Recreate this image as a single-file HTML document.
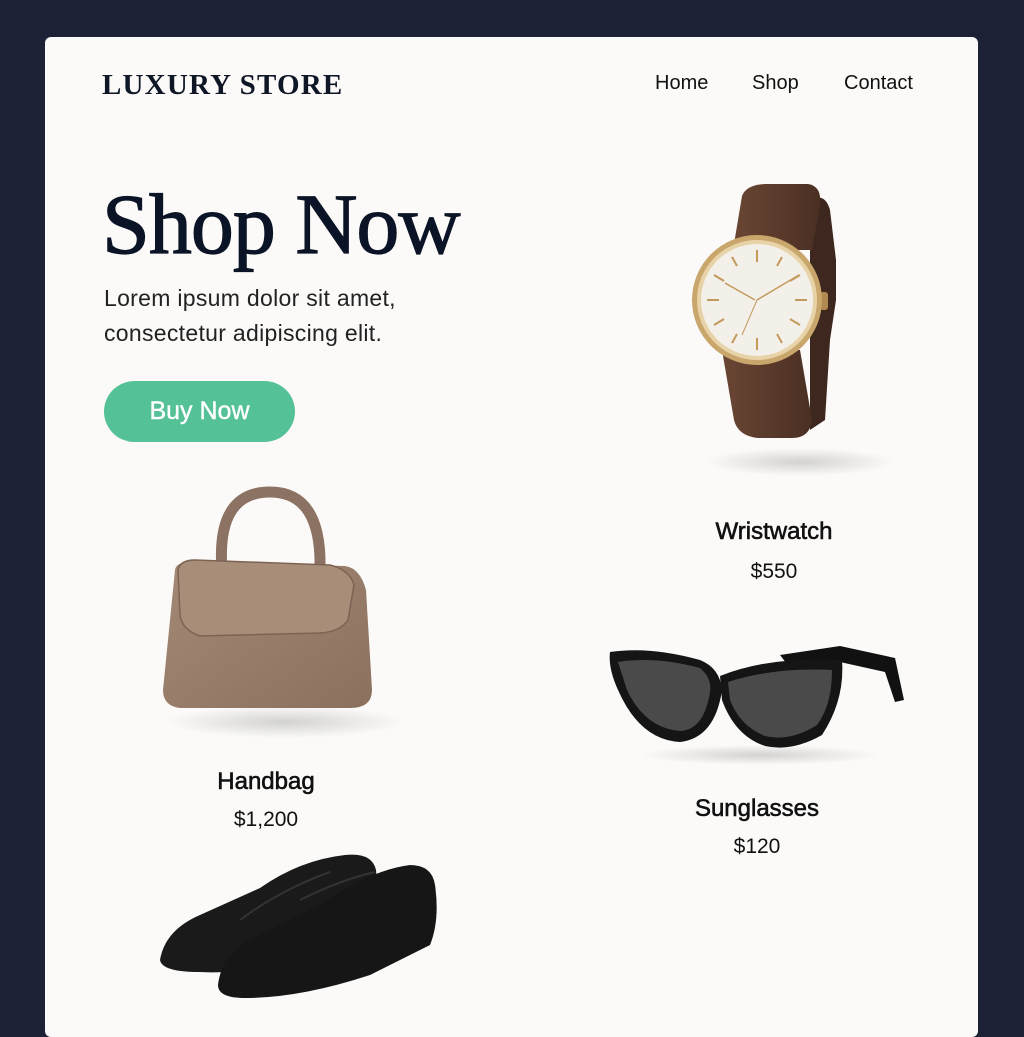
<!DOCTYPE html>
<html><head><style>
*{margin:0;padding:0;box-sizing:border-box}
body{width:1024px;height:1024px;background:#1c2135;position:relative;overflow:hidden;font-family:"Liberation Sans",sans-serif}
.card{position:absolute;left:45px;top:37px;width:933px;height:1000px;background:#fbfaf8;border-radius:6px}
.t{position:absolute;white-space:nowrap;color:#111}
.logo{left:102px;top:69px;font-family:"Liberation Serif",serif;font-weight:bold;font-size:29px;color:#0f1626;letter-spacing:1.2px}
.nav{top:72px;font-size:20px;color:#111}
.h1{left:102px;top:174px;font-family:"Liberation Serif",serif;font-size:86px;color:#0b1426;letter-spacing:-1px;-webkit-text-stroke:1.2px #0b1426}
.p{left:104px;font-size:23px;color:#222;letter-spacing:0.3px}
.btn{position:absolute;left:104px;top:381px;width:191px;height:61px;border-radius:31px;background:#55c196;color:#fff;font-size:25px;text-align:center;line-height:61px;-webkit-text-stroke:0.4px #fff}
.name{font-size:24px;text-align:center;width:240px;color:#111;-webkit-text-stroke:0.6px #111}
.price{font-size:21px;text-align:center;width:240px;color:#111}
</style></head><body>
<div class="card"></div>
<div class="t logo">LUXURY STORE</div>
<div class="t nav" style="left:655px">Home</div>
<div class="t nav" style="left:752px">Shop</div>
<div class="t nav" style="left:844px">Contact</div>
<div class="t h1">Shop Now</div>
<div class="t p" style="top:285px">Lorem ipsum dolor sit amet,</div>
<div class="t p" style="top:320px">consectetur adipiscing elit.</div>
<div class="btn">Buy Now</div>

<svg style="position:absolute;left:0;top:0" width="1024" height="1024">
<defs>
<radialGradient id="sh"><stop offset="0" stop-color="#000" stop-opacity=".16"/><stop offset="1" stop-color="#000" stop-opacity="0"/></radialGradient>
<linearGradient id="bag" x1="0" y1="0" x2="1" y2="1"><stop offset="0" stop-color="#a48a76"/><stop offset="1" stop-color="#8a705d"/></linearGradient>
<linearGradient id="st" x1="0" y1="0" x2="1" y2="0"><stop offset="0" stop-color="#6a4634"/><stop offset="1" stop-color="#4a2f23"/></linearGradient>
</defs>
<!-- watch -->
<ellipse cx="800" cy="462" rx="95" ry="14" fill="url(#sh)"/>
<path d="M810 200 Q825 192 830 210 L836 260 L836 300 L830 340 L825 420 L810 430 Z" fill="#3e271e"/>
<path d="M733 250 L742 196 Q746 185 765 184 L808 184 Q822 186 820 205 L812 250 Z" fill="url(#st)"/>
<path d="M722 350 L800 350 L812 420 Q810 438 792 438 L758 438 Q738 436 734 420 Z" fill="url(#st)"/>
<rect x="820" y="292" width="8" height="18" rx="3" fill="#b08a4f"/>
<circle cx="757" cy="300" r="65" fill="#c9a66b"/>
<circle cx="757" cy="300" r="60" fill="#e8d3a8"/>
<circle cx="757" cy="300" r="56" fill="#f3f0ea"/>
<g stroke="#c49a5c" stroke-width="2">
<line x1="757" y1="250" x2="757" y2="262"/><line x1="757" y1="338" x2="757" y2="350"/>
<line x1="707" y1="300" x2="719" y2="300"/><line x1="795" y1="300" x2="807" y2="300"/>
<line x1="732" y1="257" x2="737" y2="266"/><line x1="782" y1="257" x2="777" y2="266"/>
<line x1="714" y1="275" x2="724" y2="281"/><line x1="800" y1="275" x2="790" y2="281"/>
<line x1="714" y1="325" x2="724" y2="319"/><line x1="800" y1="325" x2="790" y2="319"/>
<line x1="732" y1="343" x2="737" y2="334"/><line x1="782" y1="343" x2="777" y2="334"/>
<line x1="755" y1="300" x2="725" y2="283" stroke-width="1.5"/><line x1="757" y1="300" x2="799" y2="275" stroke-width="1.5"/>
<line x1="757" y1="300" x2="742" y2="335" stroke-width="1"/>
</g>
<!-- handbag -->
<ellipse cx="285" cy="722" rx="120" ry="16" fill="url(#sh)"/>
<path d="M222 570 Q216 492 270 492 Q322 492 320 570" fill="none" stroke="#8c7262" stroke-width="11"/>
<path d="M175 570 Q176 562 190 562 L345 566 Q360 568 366 590 L372 690 Q372 708 350 708 L180 708 Q163 706 163 690 Z" fill="url(#bag)"/>
<path d="M178 570 Q180 560 195 560 L330 565 Q350 570 354 585 L348 620 Q340 632 320 633 L200 636 Q182 630 180 615 Z" fill="#a88d79" stroke="#7d6353" stroke-width="1.5"/>
<!-- sunglasses -->
<ellipse cx="760" cy="755" rx="120" ry="10" fill="url(#sh)"/>
<path d="M780 655 L840 646 L895 658 L904 700 L895 702 L885 672 L840 662 L790 668 Z" fill="#111"/>
<path d="M610 652 Q650 646 700 660 Q720 668 722 690 Q715 738 680 742 Q640 740 618 690 Q608 668 610 652 Z" fill="#151515"/>
<path d="M720 676 Q770 656 842 660 Q845 700 822 735 Q792 752 765 746 Q735 736 722 700 Z" fill="#151515"/>
<path d="M618 662 Q655 656 700 668 Q712 678 710 692 Q704 730 680 731 Q645 728 627 690 Z" fill="#4a4a4a"/>
<path d="M728 682 Q775 667 832 670 Q832 705 817 725 Q790 742 765 736 Q740 726 730 700 Z" fill="#4a4a4a"/>
<!-- shoes -->
<path d="M160 960 Q165 930 200 915 L260 888 Q300 860 345 855 Q372 852 376 870 Q380 905 370 930 L300 955 Q250 975 200 972 Q162 972 160 960 Z" fill="#1a1a1a"/>
<path d="M218 985 Q222 950 260 935 L320 905 Q370 870 410 865 Q432 865 435 885 Q440 920 430 945 L370 975 Q300 998 245 998 Q218 998 218 985 Z" fill="#161616"/>
<path d="M300 900 Q340 880 375 872" stroke="#333" stroke-width="2" fill="none"/>
<path d="M240 920 Q280 890 330 872" stroke="#333" stroke-width="2" fill="none"/>
</svg>

<div class="t name" style="left:654px;top:518px">Wristwatch</div>
<div class="t price" style="left:654px;top:560px">$550</div>
<div class="t name" style="left:146px;top:768px">Handbag</div>
<div class="t price" style="left:146px;top:808px">$1,200</div>
<div class="t name" style="left:637px;top:795px">Sunglasses</div>
<div class="t price" style="left:637px;top:835px">$120</div>
</body></html>
